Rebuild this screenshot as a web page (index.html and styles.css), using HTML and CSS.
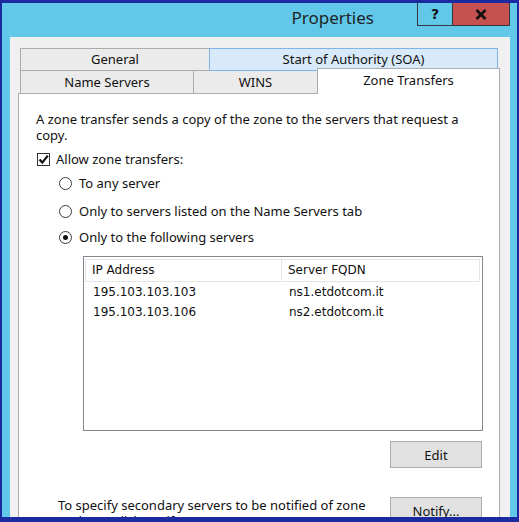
FILE: index.html
```html
<!DOCTYPE html>
<html>
<head>
<meta charset="utf-8">
<title>Properties</title>
<link rel="stylesheet" href="styles.css">
</head>
<body>
<div class="screen">
  <div class="window">
    <div class="titlebar">
      <div class="title">Properties</div>
      <div class="caption-buttons">
        <div class="cbtn help">?</div>
        <div class="cbtn close">
          <svg width="12" height="11" viewBox="0 0 12 11"><path d="M1.5 1 L10.5 10 M10.5 1 L1.5 10" stroke="#111" stroke-width="2.6" fill="none"/></svg>
        </div>
      </div>
    </div>
    <div class="client">
      <div class="tabs">
        <div class="tab-row row-back">
          <div class="tab t-general">General</div>
          <div class="tab t-soa hover">Start of Authority (SOA)</div>
        </div>
        <div class="tab-row row-front">
          <div class="tab t-ns">Name Servers</div>
          <div class="tab t-wins">WINS</div>
          <div class="tab t-zt selected">Zone Transfers</div>
        </div>
      </div>
      <div class="panel">
        <p class="intro">A zone transfer sends a copy of the zone to the servers that request a copy.</p>
        <div class="check-row">
          <span class="checkbox"><svg width="11" height="11" viewBox="0 0 11 11"><path d="M1.5 5.5 L4.3 8.6 L9.8 1.6" stroke="#111" stroke-width="2.2" fill="none"/></svg></span>
          <span>Allow zone transfers:</span>
        </div>
        <div class="radio-row r1"><span class="radio"></span><span>To any server</span></div>
        <div class="radio-row r2"><span class="radio"></span><span>Only to servers listed on the Name Servers tab</span></div>
        <div class="radio-row r3"><span class="radio on"></span><span>Only to the following servers</span></div>
        <div class="listview">
          <div class="lv-header">
            <div class="col c1">IP Address</div>
            <div class="col c2">Server FQDN</div>
          </div>
          <div class="lv-row">
            <div class="col c1">195.103.103.103</div>
            <div class="col c2">ns1.etdotcom.it</div>
          </div>
          <div class="lv-row">
            <div class="col c1">195.103.103.106</div>
            <div class="col c2">ns2.etdotcom.it</div>
          </div>
        </div>
        <div class="edit-row"><div class="button">Edit</div></div>
        <div class="notify-row">
          <p class="notify-text">To specify secondary servers to be notified of zone updates, click Notify.</p>
          <div class="button">Notify...</div>
        </div>
      </div>
    </div>
  </div>
</div>
</body>
</html>
```
FILE: styles.css
```css
html, body {
  margin: 0;
  padding: 0;
}
body {
  background: #1b2a9e;
  font-family: "Noto Sans", "Open Sans", sans-serif;
  font-size: 13px;
  color: #111;
}
.screen {
  width: 519px;
  height: 522px;
  overflow: hidden;
  background: #1b2a9e;
  padding: 3px 2px 0 2px;
  box-sizing: border-box;
}
.window {
  height: 514px;
  background: #62c8ea;
  padding: 0 7px 0 8px;
  box-sizing: border-box;
  display: flex;
  flex-direction: column;
  overflow: hidden;
}
.titlebar {
  height: 34px;
  flex: none;
  display: flex;
  justify-content: flex-end;
  align-items: flex-start;
}
.title {
  font-size: 17px;
  line-height: 22px;
  margin-top: 4px;
  margin-right: 43px;
  color: #1d2424;
}
.caption-buttons {
  display: flex;
}
.cbtn {
  height: 22px;
  box-sizing: content-box;
  border: 1px solid #343a3c;
  border-top: none;
  display: flex;
  align-items: center;
  justify-content: center;
}
.help {
  width: 34px;
  background: #62c8ea;
  font-weight: bold;
  font-size: 14px;
  color: #111;
  font-family: "DejaVu Sans", sans-serif;
}
.close {
  width: 56px;
  margin-left: -1px;
  background: #c75050;
}
.client {
  flex: 1;
  background: #f0f0f0;
  padding: 11px 10px 0 8px;
  display: flex;
  flex-direction: column;
}
.tabs {
  padding-left: 2px;
}
.tab-row {
  display: flex;
}
.tab {
  box-sizing: border-box;
  border: 1px solid #acacac;
  background: #ebebeb;
  display: flex;
  align-items: center;
  justify-content: center;
  line-height: 16px;
}
.tab + .tab {
  margin-left: -1px;
}
.row-back .tab {
  height: 23px;
  padding-bottom: 1px;
}
.t-general { width: 190px; }
.t-soa { width: 289px; }
.tab.hover {
  background: #d8eaf9;
  border-color: #7eb4ea;
  position: relative;
}
.row-front {
  margin-top: -3px;
  align-items: flex-end;
}
.row-front .tab {
  height: 23px;
  border-bottom: none;
}
.t-ns { width: 174px; }
.t-wins { width: 125px; }
.tab.selected {
  width: 183px;
  height: 26px;
  background: #fff;
  margin-bottom: -1px;
  position: relative;
  z-index: 2;
  padding-bottom: 3px;
}
.panel {
  flex: 1;
  background: #fff;
  border: 1px solid #acacac;
  padding: 17px 16px 0 17px;
}
.intro {
  margin: 0;
  line-height: 16px;
  width: 446px;
}
.check-row, .radio-row {
  display: flex;
  align-items: center;
  height: 16px;
  line-height: 16px;
}
.check-row {
  margin-top: 8px;
  gap: 6px;
}
.checkbox {
  width: 13px;
  height: 13px;
  box-sizing: border-box;
  border: 1px solid #333;
  background: #fff;
  margin-left: 1px;
  display: flex;
  align-items: center;
  justify-content: center;
}
.radio-row {
  padding-left: 23px;
  gap: 7px;
}
.r1 { margin-top: 8px; }
.r2 { margin-top: 12px; }
.r3 { margin-top: 10px; }
.radio {
  width: 13px;
  height: 13px;
  box-sizing: border-box;
  border: 1px solid #3c3c3c;
  border-radius: 50%;
  background: #fff;
  display: flex;
  align-items: center;
  justify-content: center;
}
.radio.on::after {
  content: "";
  width: 5px;
  height: 5px;
  border-radius: 50%;
  background: #111;
}
.listview {
  margin-top: 11px;
  margin-left: 47px;
  width: 400px;
  height: 175px;
  box-sizing: border-box;
  border: 1px solid #828790;
  padding: 2px 1px 1px 1px;
  font-family: "DejaVu Sans", sans-serif;
  font-size: 12px;
}
.lv-header {
  display: flex;
  width: 395px;
  height: 23px;
  box-sizing: border-box;
  border: 1px solid #e5e5e5;
  line-height: 21px;
}
.lv-header .c1 {
  width: 196px;
  padding-left: 6px;
  border-right: 1px solid #e5e5e5;
}
.lv-header .c2 {
  padding-left: 6px;
}
.col {
  box-sizing: border-box;
}
.lv-row {
  display: flex;
  height: 20px;
  line-height: 20px;
}
.lv-row .c1 {
  width: 197px;
  padding-left: 8px;
}
.lv-row .c2 {
  padding-left: 7px;
}
.edit-row {
  display: flex;
  justify-content: flex-end;
  margin-top: 10px;
  padding-right: 1px;
}
.button {
  width: 92px;
  height: 27px;
  box-sizing: border-box;
  border: 1px solid #adadad;
  background: #e1e1e1;
  display: flex;
  align-items: center;
  justify-content: center;
  flex: none;
}
.notify-row {
  display: flex;
  justify-content: space-between;
  align-items: flex-start;
  margin-top: 29px;
  padding-left: 22px;
  padding-right: 1px;
}
.notify-text {
  margin: 0;
  width: 320px;
  line-height: 16px;
}
```
